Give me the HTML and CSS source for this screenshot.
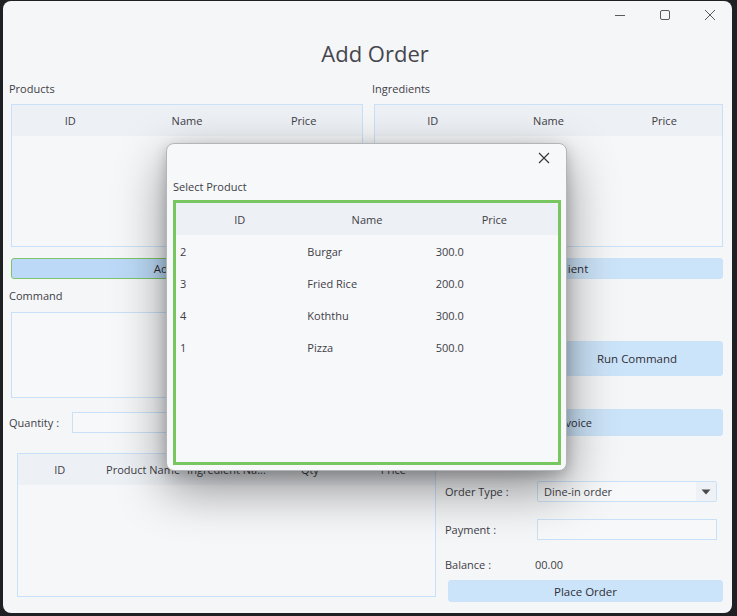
FILE: index.html
```html
<!DOCTYPE html>
<html>
<head>
<meta charset="utf-8">
<title>Add Order</title>
<link rel="stylesheet" href="styles.css">
</head>
<body>
<div class="window">
  <div class="titlebar">
    <span class="ctl"><svg width="12" height="12" viewBox="0 0 12 12"><path d="M1 6.5h10" stroke="#5a5a5a" stroke-width="1"/></svg></span>
    <span class="ctl"><svg width="12" height="12" viewBox="0 0 12 12"><rect x="1.5" y="1.5" width="9" height="9" rx="1.5" fill="none" stroke="#5a5a5a" stroke-width="1"/></svg></span>
    <span class="ctl"><svg width="12" height="12" viewBox="0 0 12 12"><path d="M1 1L11 11M11 1L1 11" stroke="#5a5a5a" stroke-width="1"/></svg></span>
  </div>
  <h1 class="title">Add Order</h1>
  <div class="content">
    <div class="top">
      <section class="col">
        <div class="label">Products</div>
        <div class="table">
          <div class="thead three"><span>ID</span><span>Name</span><span>Price</span></div>
        </div>
        <button class="btn focus">Add Product</button>
      </section>
      <section class="col">
        <div class="label">Ingredients</div>
        <div class="table">
          <div class="thead three"><span>ID</span><span>Name</span><span>Price</span></div>
        </div>
        <button class="btn">Add Ingredient</button>
      </section>
    </div>
    <div class="label cmd">Command</div>
    <div class="mid">
      <div class="textarea"></div>
      <button class="btn run">Run Command</button>
    </div>
    <div class="qty-row">
      <div class="qty"><span class="qty-label">Quantity :</span><div class="input qty-input"></div></div>
      <button class="btn invoice">Generate Invoice</button>
    </div>
    <div class="bottom">
      <div class="table order-table">
        <div class="thead five"><span>ID</span><span>Product Name</span><span>Ingredient Na...</span><span>Qty</span><span>Price</span></div>
      </div>
      <div class="form">
        <div class="frow">
          <span class="flabel">Order Type :</span>
          <div class="combo"><span class="combo-text">Dine-in order</span><span class="combo-arrow"><svg width="10" height="6" viewBox="0 0 10 6"><path d="M0.5 0.5h9L5 5.5z" fill="#4a4a4a"/></svg></span></div>
        </div>
        <div class="frow pay">
          <span class="flabel">Payment :</span>
          <div class="input pay-input"></div>
        </div>
        <div class="frow bal">
          <span class="flabel">Balance :</span>
          <span class="bal-value">00.00</span>
        </div>
        <button class="btn place">Place Order</button>
      </div>
    </div>
  </div>

  <div class="dialog">
    <div class="dlg-bar">
      <span class="dlg-close"><svg width="12" height="12" viewBox="0 0 12 12"><path d="M1 1L11 11M11 1L1 11" stroke="#333" stroke-width="1.1"/></svg></span>
    </div>
    <div class="dlg-label">Select Product</div>
    <div class="dlg-table">
      <div class="dthead"><span>ID</span><span>Name</span><span>Price</span></div>
      <div class="drow"><span>2</span><span>Burgar</span><span>300.0</span></div>
      <div class="drow"><span>3</span><span>Fried Rice</span><span>200.0</span></div>
      <div class="drow"><span>4</span><span>Koththu</span><span>300.0</span></div>
      <div class="drow"><span>1</span><span>Pizza</span><span>500.0</span></div>
    </div>
  </div>
</div>
</body>
</html>
```

FILE: styles.css
```css
html, body {
  margin: 0;
  padding: 0;
}
body {
  background: #1f2023;
  font-family: "Open Sans", "Noto Sans", sans-serif;
  font-size: 11px;
  color: #3e3e46;
  height: 616px;
  overflow: hidden;
}
.window {
  position: relative;
  margin: 1px 0 0 3px;
  width: 729px;
  height: 612px;
  background: #f5f6f8;
  border-radius: 8px;
  overflow: hidden;
}
.titlebar {
  display: flex;
  justify-content: flex-end;
  height: 30px;
}
.ctl {
  width: 45px;
  height: 28px;
  display: flex;
  align-items: center;
  justify-content: center;
}
.title {
  margin: 7px 0 0;
  padding-left: 15px;
  height: 30px;
  line-height: 30px;
  text-align: center;
  font-size: 22px;
  font-weight: 400;
  color: #46464e;
}
.content {
  padding: 0 9px 0 6px;
}
.top {
  margin-top: 13px;
  display: grid;
  grid-template-columns: 354px 351px;
  column-gap: 9px;
}
.label {
  line-height: 16px;
  height: 16px;
}
.table {
  margin: 7px 0 0 2px;
  height: 143px;
  border: 1px solid #c9e1f8;
  background: #f6f7f9;
  box-sizing: border-box;
}
.thead {
  display: grid;
  height: 31px;
  align-items: center;
  background: #edf0f4;
  text-align: center;
}
.thead.three { grid-template-columns: repeat(3, 1fr); }
.thead.five { grid-template-columns: repeat(5, 1fr); }
.thead span {
  white-space: nowrap;
}
.btn {
  display: block;
  margin: 11px 0 0 2px;
  width: calc(100% - 2px);
  height: 21px;
  padding: 0;
  border: 1px solid #cbe2f8;
  border-radius: 3px;
  background: #cce4f9;
  font: inherit;
  font-size: 11.5px;
  color: #2f2f37;
  box-sizing: border-box;
}
.btn.focus {
  background: #bcdaf7;
  border-color: #7cc56a;
}
.cmd {
  margin-top: 9px;
}
.mid {
  margin-top: 8px;
  display: flex;
  align-items: flex-start;
  gap: 11px;
}
.textarea {
  margin-left: 2px;
  flex: 1;
  height: 86px;
  border: 1px solid #c9e1f8;
  background: #f7f8fa;
  box-sizing: border-box;
}
.btn.run {
  margin: 29px 0 0;
  width: 172px;
  height: 35px;
}
.qty-row {
  margin-top: 11px;
  height: 27px;
  display: flex;
  align-items: center;
  justify-content: space-between;
}
.qty {
  display: flex;
  align-items: center;
}
.qty-label {
  width: 63px;
}
.input {
  height: 21px;
  border: 1px solid #c9e1f8;
  background: #f7f8fa;
  box-sizing: border-box;
}
.qty-input {
  width: 228px;
}
.btn.invoice {
  margin: 0;
  width: 349px;
  height: 27px;
  font-size: 11px;
}
.bottom {
  margin-top: 17px;
  display: flex;
  gap: 9px;
}
.order-table {
  margin: 0 0 0 8px;
  width: 419px;
  height: 144px;
}
.form {
  width: 278px;
  padding-top: 28px;
}
.frow {
  display: flex;
  align-items: center;
  height: 21px;
}
.flabel {
  width: 92px;
}
.combo {
  width: 180px;
  height: 21px;
  display: flex;
  border: 1px solid #c9e1f8;
  border-radius: 2px;
  background: #f7f8fa;
  box-sizing: border-box;
}
.combo-text {
  flex: 1;
  padding-left: 6px;
  line-height: 19px;
}
.combo-arrow {
  width: 20px;
  background: #eef1f5;
  display: flex;
  align-items: center;
  justify-content: center;
}
.frow.pay {
  margin-top: 17px;
}
.pay-input {
  width: 180px;
}
.frow.bal {
  margin-top: 16px;
  height: 16px;
}
.bal-value {
  margin-left: -2px;
}
.btn.place {
  margin: 8px 0 0 3px;
  width: 275px;
  height: 22px;
}

/* dialog */
.dialog {
  position: absolute;
  left: 163px;
  top: 142px;
  width: 401px;
  height: 328px;
  box-sizing: border-box;
  background: #f7f8fa;
  border: 1px solid #b4b5b9;
  border-radius: 8px;
  box-shadow: 0 18px 50px rgba(0, 0, 0, 0.42), 0 4px 14px rgba(0, 0, 0, 0.2);
}
.dlg-bar {
  display: flex;
  justify-content: flex-end;
  height: 28px;
}
.dlg-close {
  width: 44px;
  height: 28px;
  display: flex;
  align-items: center;
  justify-content: center;
}
.dlg-label {
  margin: 7px 0 0 6px;
  line-height: 16px;
  height: 16px;
}
.dlg-table {
  margin: 5px 0 0 6px;
  width: 388px;
  height: 265px;
  border: 3px solid #77c65f;
  box-sizing: border-box;
  background: #f7f8fa;
}
.dthead {
  display: grid;
  grid-template-columns: repeat(3, 1fr);
  height: 32px;
  align-items: center;
  background: #edf0f4;
  text-align: center;
}
.drow {
  display: grid;
  grid-template-columns: repeat(3, 1fr);
  height: 32px;
  align-items: center;
}
.drow span {
  padding-left: 4px;
}
.drow span:last-child {
  padding-left: 5px;
}
```
